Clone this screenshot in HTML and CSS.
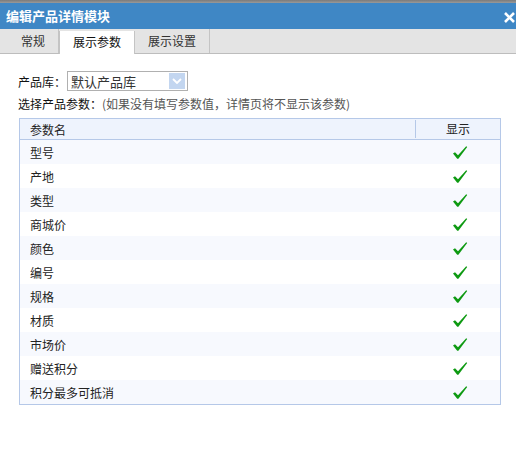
FILE: index.html
```html
<!DOCTYPE html>
<html lang="zh">
<head>
<meta charset="utf-8">
<link rel="stylesheet" href="styles.css">
</head>
<body>
<div class="dialog">
  <div class="topline"></div>
  <div class="titlebar">
    <span class="title">编辑产品详情模块</span>
    <span class="close"><svg width="11" height="11" viewBox="0 0 11 11"><path d="M1 1 L10 10 M10 1 L1 10" stroke="#fff" stroke-width="2.6" fill="none"/></svg></span>
  </div>
  <div class="tabs">
    <div class="tab">常规</div>
    <div class="tab active">展示参数</div>
    <div class="tab">展示设置</div>
  </div>
  <div class="content">
    <div class="lib-row">
      <span class="label">产品库：</span>
      <div class="select">
        <span class="select-text">默认产品库</span>
        <span class="select-btn">
          <svg width="10" height="6" viewBox="0 0 10 6"><path d="M1 1 L5 5 L9 1" fill="none" stroke="#fff" stroke-width="1.8"/></svg>
        </span>
      </div>
    </div>
    <div class="note-row">
      <span class="label">选择产品参数：</span><span class="note">(如果没有填写参数值，详情页将不显示该参数)</span>
    </div>
    <div class="table">
      <div class="thead">
        <div class="c-name">参数名</div>
        <div class="c-show">显示</div>
      </div>
      <div class="row alt"><div class="c-name">型号</div><div class="c-show"><svg class="check" viewBox="0 0 16 15"><path d="M1 8.5 L3 7.2 L6 10.2 L14.2 1.2 L15.2 2 L6.4 13.8 L5.2 13.8 Z" fill="#0e9a12"/></svg></div></div>
      <div class="row"><div class="c-name">产地</div><div class="c-show"><svg class="check" viewBox="0 0 16 15"><path d="M1 8.5 L3 7.2 L6 10.2 L14.2 1.2 L15.2 2 L6.4 13.8 L5.2 13.8 Z" fill="#0e9a12"/></svg></div></div>
      <div class="row alt"><div class="c-name">类型</div><div class="c-show"><svg class="check" viewBox="0 0 16 15"><path d="M1 8.5 L3 7.2 L6 10.2 L14.2 1.2 L15.2 2 L6.4 13.8 L5.2 13.8 Z" fill="#0e9a12"/></svg></div></div>
      <div class="row"><div class="c-name">商城价</div><div class="c-show"><svg class="check" viewBox="0 0 16 15"><path d="M1 8.5 L3 7.2 L6 10.2 L14.2 1.2 L15.2 2 L6.4 13.8 L5.2 13.8 Z" fill="#0e9a12"/></svg></div></div>
      <div class="row alt"><div class="c-name">颜色</div><div class="c-show"><svg class="check" viewBox="0 0 16 15"><path d="M1 8.5 L3 7.2 L6 10.2 L14.2 1.2 L15.2 2 L6.4 13.8 L5.2 13.8 Z" fill="#0e9a12"/></svg></div></div>
      <div class="row"><div class="c-name">编号</div><div class="c-show"><svg class="check" viewBox="0 0 16 15"><path d="M1 8.5 L3 7.2 L6 10.2 L14.2 1.2 L15.2 2 L6.4 13.8 L5.2 13.8 Z" fill="#0e9a12"/></svg></div></div>
      <div class="row alt"><div class="c-name">规格</div><div class="c-show"><svg class="check" viewBox="0 0 16 15"><path d="M1 8.5 L3 7.2 L6 10.2 L14.2 1.2 L15.2 2 L6.4 13.8 L5.2 13.8 Z" fill="#0e9a12"/></svg></div></div>
      <div class="row"><div class="c-name">材质</div><div class="c-show"><svg class="check" viewBox="0 0 16 15"><path d="M1 8.5 L3 7.2 L6 10.2 L14.2 1.2 L15.2 2 L6.4 13.8 L5.2 13.8 Z" fill="#0e9a12"/></svg></div></div>
      <div class="row alt"><div class="c-name">市场价</div><div class="c-show"><svg class="check" viewBox="0 0 16 15"><path d="M1 8.5 L3 7.2 L6 10.2 L14.2 1.2 L15.2 2 L6.4 13.8 L5.2 13.8 Z" fill="#0e9a12"/></svg></div></div>
      <div class="row"><div class="c-name">赠送积分</div><div class="c-show"><svg class="check" viewBox="0 0 16 15"><path d="M1 8.5 L3 7.2 L6 10.2 L14.2 1.2 L15.2 2 L6.4 13.8 L5.2 13.8 Z" fill="#0e9a12"/></svg></div></div>
      <div class="row alt"><div class="c-name">积分最多可抵消</div><div class="c-show"><svg class="check" viewBox="0 0 16 15"><path d="M1 8.5 L3 7.2 L6 10.2 L14.2 1.2 L15.2 2 L6.4 13.8 L5.2 13.8 Z" fill="#0e9a12"/></svg></div></div>
    </div>
  </div>
</div>
</body>
</html>
```

FILE: styles.css
```css
html, body {
  margin: 0;
  padding: 0;
  background: #fff;
}
body {
  font-family: "Noto Sans CJK SC", "Liberation Sans", sans-serif;
  font-size: 12px;
  color: #222;
}
.dialog {
  width: 516px;
  height: 466px;
  overflow: hidden;
}
.topline {
  height: 3px;
  background: linear-gradient(#7a7a7a, #9a9a9a);
}
.titlebar {
  height: 26px;
  background: #3f87c5;
  display: flex;
  align-items: center;
  justify-content: space-between;
  padding: 0 0 0 6px;
}
.title {
  color: #fff;
  font-weight: bold;
  font-size: 13px;
  line-height: 26px;
}
.close {
  width: 11px;
  height: 11px;
  margin-top: 3px;
  margin-right: 1px;
  display: block;
}
.close svg {
  display: block;
}
.tabs {
  height: 24px;
  background: #e4e4e4;
  border-bottom: 1px solid #bdbdbd;
  display: flex;
  padding-left: 8px;
}
.tab {
  padding: 0 13px;
  border-right: 1px solid #c4c4c4;
  line-height: 24px;
  font-size: 12px;
  color: #333;
}
.tab.active {
  background: #fff;
  border-left: 1px solid #c4c4c4;
  margin-top: 2px;
  line-height: 22px;
  height: 23px;
  color: #111;
}
.content {
  padding: 17px 0 0 18px;
}
.lib-row {
  display: flex;
  align-items: center;
  height: 20px;
}
.label {
  color: #111;
}
.select {
  width: 119px;
  height: 18px;
  border: 1px solid #b0b0b0;
  display: flex;
  align-items: center;
  justify-content: space-between;
  margin-left: 1px;
}
.select-text {
  padding-left: 3px;
  color: #333;
  font-size: 13px;
}
.select-btn {
  width: 16px;
  height: 16px;
  background: #c3d6f0;
  margin-right: 2px;
  display: flex;
  align-items: center;
  justify-content: center;
}
.note-row {
  margin-top: 6px;
  height: 14px;
  line-height: 14px;
}
.note {
  color: #555;
}
.table {
  margin-top: 7px;
  margin-left: 1px;
  width: 480px;
  border: 1px solid #b5c8e8;
}
.thead {
  display: flex;
  height: 20px;
  background: #eef3fd;
  border-bottom: 1px solid #b5c8e8;
  align-items: center;
}
.thead .c-show {
  border-left: 1px solid #b5c8e8;
  height: 18px;
  line-height: 18px;
}
.c-name {
  flex: 1;
  padding-left: 10px;
}
.c-show {
  width: 84px;
  text-align: center;
}
.row {
  display: flex;
  height: 24px;
  align-items: center;
  background: #fff;
}
.row.alt {
  background: #f7f9fe;
}
.check {
  width: 16px;
  height: 15px;
  display: block;
  margin: 0 auto 0 36px;
}
```
